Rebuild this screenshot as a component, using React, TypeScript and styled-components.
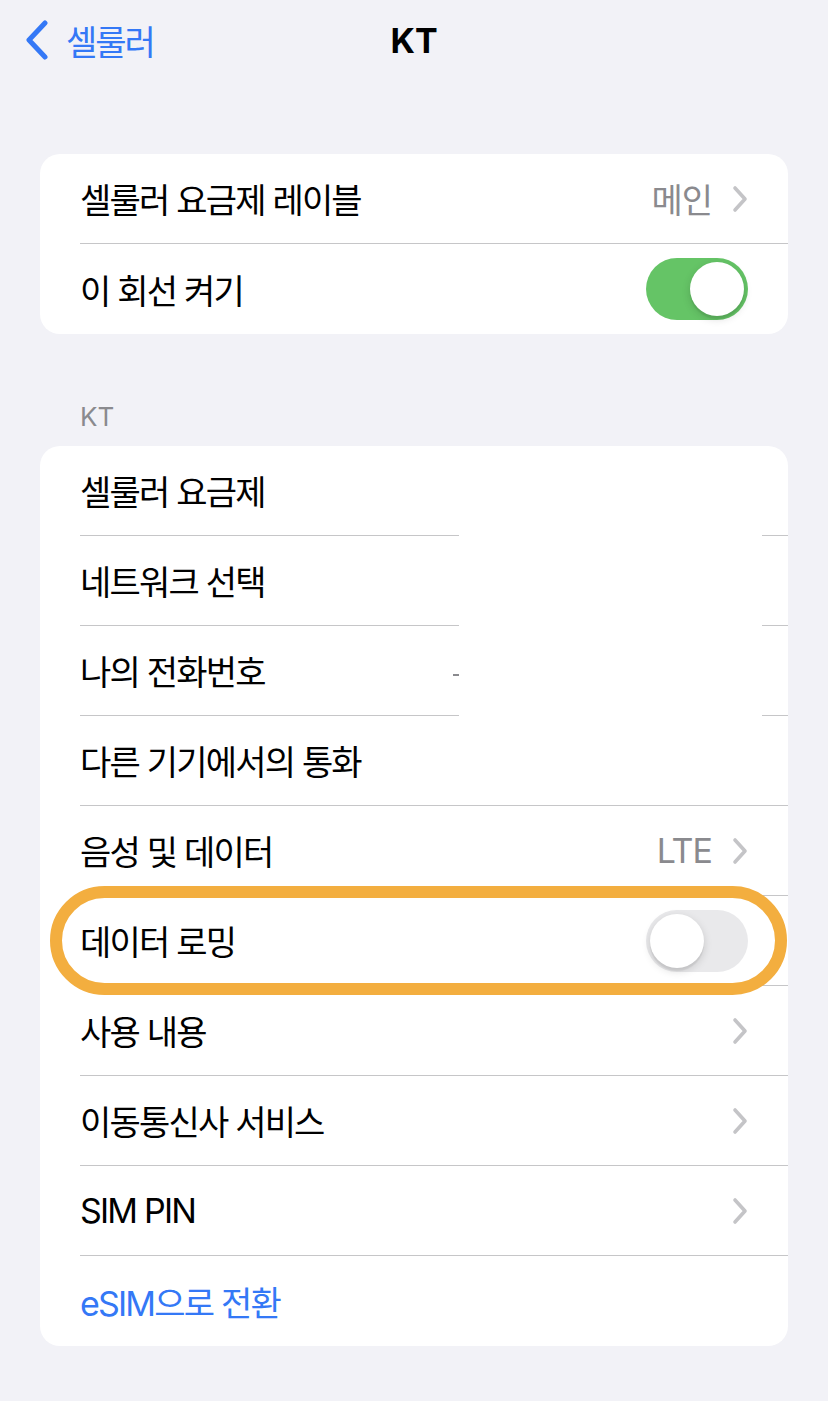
import React from "react";
import styled, { createGlobalStyle } from "styled-components";

const GlobalStyle = createGlobalStyle`
  html, body {
    margin: 0;
    padding: 0;
    background: #f2f2f7;
  }
  body {
    font-family: Inter, "Noto Sans CJK KR", "Noto Sans", sans-serif;
    -webkit-font-smoothing: antialiased;
  }
`;

const Page = styled.div`
  width: 828px;
  min-height: 1401px;
  background: #f2f2f7;
  display: flex;
  flex-direction: column;
`;

const NavBar = styled.div`
  position: relative;
  height: 80px;
  display: flex;
  align-items: center;
  justify-content: center;
`;

const BackButton = styled.div`
  position: absolute;
  left: 24px;
  top: 0;
  height: 80px;
  display: flex;
  align-items: center;
  gap: 16px;
  color: #3478f6;
  font-size: 34px;
  letter-spacing: -2px;
`;

const Title = styled.div`
  font-size: 34px;
  font-weight: 700;
  color: #000;
`;

const Content = styled.div`
  padding: 74px 40px 0;
  display: flex;
  flex-direction: column;
`;

const Card = styled.div`
  position: relative;
  background: #fff;
  border-radius: 20px;
`;

const SectionHeader = styled.div`
  height: 112px;
  box-sizing: border-box;
  display: flex;
  align-items: flex-end;
  padding: 0 40px 14px;
  font-size: 26px;
  color: #8a8a8e;
`;

const Row = styled.div<{ $last?: boolean }>`
  position: relative;
  height: 90px;
  margin-left: 40px;
  padding-right: 40px;
  box-sizing: border-box;
  display: flex;
  align-items: center;
  justify-content: space-between;
  border-bottom: ${(p) => (p.$last ? "none" : "1px solid #c6c6c8")};
`;

const Label = styled.div<{ $link?: boolean }>`
  font-size: 34px;
  color: ${(p) => (p.$link ? "#3478f6" : "#000")};
  letter-spacing: -1.8px;
`;

const Trailing = styled.div`
  display: flex;
  align-items: center;
  gap: 20px;
`;

const Value = styled.div`
  font-size: 34px;
  color: #8a8a8e;
  letter-spacing: -1px;
`;

const Toggle = styled.div<{ $on?: boolean }>`
  width: 102px;
  height: 62px;
  border-radius: 31px;
  background: ${(p) => (p.$on ? "#65c466" : "#e9e9eb")};
  padding: 4px;
  box-sizing: border-box;
  display: flex;
  justify-content: ${(p) => (p.$on ? "flex-end" : "flex-start")};
`;

const Knob = styled.div`
  width: 54px;
  height: 54px;
  border-radius: 50%;
  background: #fff;
  box-shadow: 0 3px 8px rgba(0, 0, 0, 0.15), 0 3px 1px rgba(0, 0, 0, 0.06);
`;

const Highlight = styled.div`
  position: absolute;
  left: -30px;
  right: 1px;
  top: -10px;
  bottom: -10px;
  border: 12px solid #f3ae3f;
  border-radius: 56px;
  pointer-events: none;
`;

const Redaction = styled.div`
  position: absolute;
  left: 419px;
  width: 303px;
  top: 20px;
  height: 335px;
  background: #fff;
`;

const Dash = styled.div`
  position: absolute;
  left: 413px;
  top: 228px;
  width: 6px;
  height: 2px;
  background: #8a8a8e;
`;

const Chevron = () => (
  <svg width="16" height="28" viewBox="0 0 16 28" fill="none">
    <polyline
      points="3,3 13,14 3,25"
      stroke="#c4c4c7"
      strokeWidth="3.6"
      strokeLinecap="round"
      strokeLinejoin="round"
    />
  </svg>
);

const BackChevron = () => (
  <svg width="26" height="40" viewBox="0 0 26 40" fill="none">
    <polyline
      points="21,3 5,20 21,37"
      stroke="#3478f6"
      strokeWidth="5"
      strokeLinecap="round"
      strokeLinejoin="round"
    />
  </svg>
);

type Item = {
  label: string;
  value?: string;
  chevron?: boolean;
  toggle?: "on" | "off";
  link?: boolean;
  highlight?: boolean;
};

const section1: Item[] = [
  { label: "셀룰러 요금제 레이블", value: "메인", chevron: true },
  { label: "이 회선 켜기", toggle: "on" },
];

const section2: Item[] = [
  { label: "셀룰러 요금제", chevron: true },
  { label: "네트워크 선택", chevron: true },
  { label: "나의 전화번호", chevron: true },
  { label: "다른 기기에서의 통화", chevron: true },
  { label: "음성 및 데이터", value: "LTE", chevron: true },
  { label: "데이터 로밍", toggle: "off", highlight: true },
  { label: "사용 내용", chevron: true },
  { label: "이동통신사 서비스", chevron: true },
  { label: "SIM PIN", chevron: true },
  { label: "eSIM으로 전환", link: true },
];

const renderRows = (items: Item[]) =>
  items.map((it, i) => (
    <Row key={it.label} $last={i === items.length - 1}>
      <Label $link={it.link}>{it.label}</Label>
      {(it.value || it.chevron || it.toggle) && (
        <Trailing>
          {it.value && <Value>{it.value}</Value>}
          {it.chevron && <Chevron />}
          {it.toggle && (
            <Toggle $on={it.toggle === "on"}>
              <Knob />
            </Toggle>
          )}
        </Trailing>
      )}
      {it.highlight && <Highlight />}
    </Row>
  ));

export default function App() {
  return (
    <Page>
      <GlobalStyle />
      <NavBar>
        <BackButton>
          <BackChevron />
          <span>셀룰러</span>
        </BackButton>
        <Title>KT</Title>
      </NavBar>
      <Content>
        <Card>{renderRows(section1)}</Card>
        <SectionHeader>KT</SectionHeader>
        <Card>
          {renderRows(section2)}
          <Redaction />
          <Dash />
        </Card>
      </Content>
    </Page>
  );
}
